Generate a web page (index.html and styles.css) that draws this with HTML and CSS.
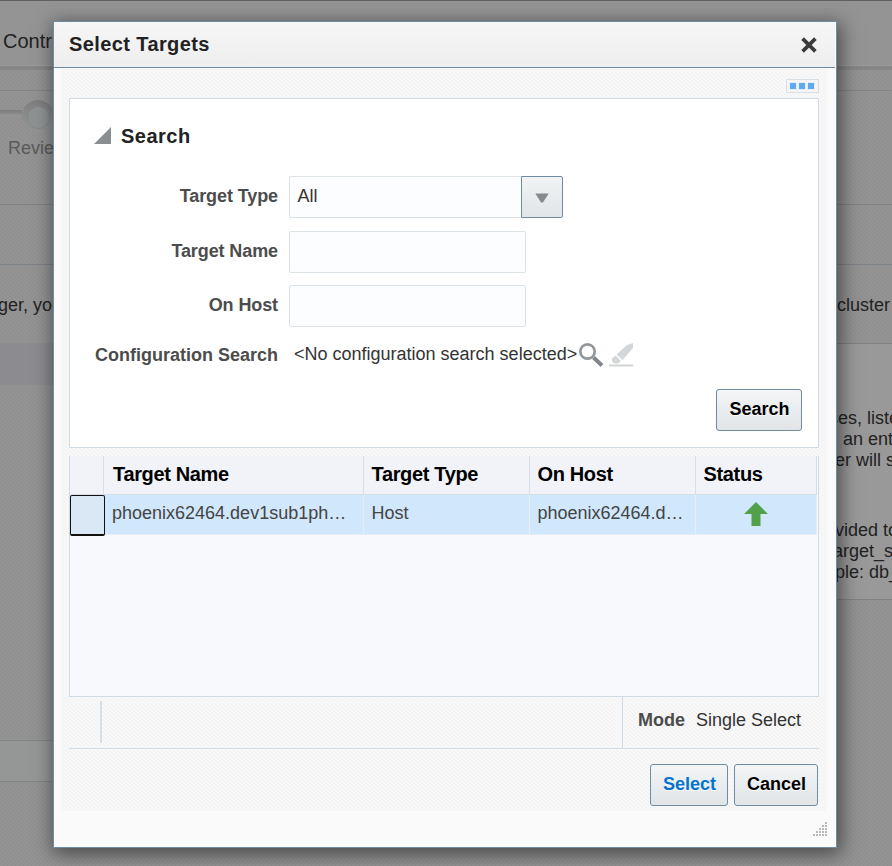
FILE: index.html
```html
<!DOCTYPE html>
<html lang="en">
<head>
<meta charset="utf-8">
<title>Select Targets</title>
<link rel="stylesheet" href="styles.css">
</head>
<body>
<div class="page">
  <header class="page-head">Contr</header>
  <div class="page-shade"></div>
  <div class="page-gap"></div>
  <section class="train">
    <div class="train-track"><span class="train-line"></span><span class="train-stop"></span></div>
    <div class="train-label">Revie</div>
  </section>
  <div class="page-bar"></div>
  <div class="page-note"><span class="note-left">ger, you</span><span>cluster</span></div>
  <div class="page-columns">
    <div class="page-left"><div class="band"></div><div class="field-band"></div></div>
    <div class="page-help">
      <p><span class="clip-ses">ses, liste</span><br><span class="clip-an">an ent</span><br>er will s</p>
      <p><span class="clip-vided">vided to</span><br><span class="clip-arget">arget_s</span><br><span class="clip-ple">ple: db_</span></p>
    </div>
  </div>
</div>

<div class="dialog" role="dialog" aria-labelledby="dialog-title">
  <header class="dialog-head">
    <h1 id="dialog-title">Select Targets</h1>
    <svg class="close" width="18" height="18" viewBox="0 0 18 18"><path d="M2.600 2.600 15.400 15.400M15.400 2.600 2.600 15.400" stroke="#3b3b3b" stroke-width="3.700"/></svg>
  </header>
  <div class="content">
    <div class="busy-row"><div class="busy"><i></i><i></i><i></i></div></div>
    <section class="search">
      <h2><svg width="17" height="17" viewBox="0 0 17 17"><path d="M0 17 17 0V17Z" fill="#8a8d92"/></svg><span>Search</span></h2>
      <div class="form">
        <label>Target Type</label>
        <div class="select"><div class="select-value">All</div><div class="select-arrow"><svg width="14" height="10" viewBox="0 0 14 10"><path d="M.3.4H13.700L8 9.400H6Z" fill="#858b8e"/></svg></div></div>
        <label>Target Name</label>
        <div class="input"></div>
        <label>On Host</label>
        <div class="input"></div>
        <label class="l-conf">Configuration Search</label>
        <div class="conf"><span>&lt;No configuration search selected&gt;</span>
          <svg class="lens" width="26" height="26" viewBox="0 0 26 26" fill="none"><path d="m15.500 15.500 8.500 8" stroke="#81868b" stroke-width="4"/><circle cx="9.500" cy="9.500" r="7.200" fill="#fff" stroke="#92979a" stroke-width="2.700"/></svg>
          <svg class="pencil" width="24" height="24" viewBox="0 0 24 24"><path d="M0 22.500H24" stroke="#d3d4d5" stroke-width="2"/><path d="M24 0V5L13.500 17 7.500 11.500 18 2Z" fill="#d4d7d9"/><path d="M6.500 12.500 12 18 9 20.500H5L3 18V15.500Z" fill="#d4d7d9"/></svg>
        </div>
      </div>
      <div class="search-actions"><button class="btn b-search">Search</button></div>
    </section>
    <div class="table">
      <div class="tr th"><div></div><div>Target Name</div><div>Target Type</div><div>On Host</div><div>Status</div></div>
      <div class="tr td"><div class="rowhead"></div><div>phoenix62464.dev1sub1ph…</div><div>Host</div><div>phoenix62464.d…</div><div class="status"><svg width="24" height="24" viewBox="0 0 24 24"><path d="M12 0 24 12H16.500V24H7.500V12H0Z" fill="#52a04a"/></svg></div></div>
    </div>
    <div class="table-foot"><div class="foot-mark"></div><div class="mode"><b>Mode</b><span>Single Select</span></div></div>
    <div class="actions"><button class="btn primary">Select</button><button class="btn b-cancel">Cancel</button></div>
  </div>
  <div class="grip"><svg width="15" height="15" viewBox="0 0 15 15" fill="#b9b9b9"><path d="M12 0h2v2h-2zM9 3h2v2H9zM12 3h2v2h-2zM6 6h2v2H6zM9 6h2v2H9zM12 6h2v2h-2zM3 9h2v2H3zM6 9h2v2H6zM9 9h2v2H9zM12 9h2v2h-2zM0 12h2v2H0zM3 12h2v2H3zM6 12h2v2H6zM9 12h2v2H9zM12 12h2v2h-2z"/></svg></div>
</div>
</body>
</html>
```
FILE: styles.css
```css
* { box-sizing: border-box; }
body {
  margin: 0;
  height: 866px;
  overflow: hidden;
  font: 18px/21px "Liberation Sans", Arial, sans-serif;
  color: #333;
}
h1, h2, p { margin: 0; }
svg { display: block; flex: none; }

/* dimmed page behind the dialog */
.page {
  height: 866px;
  overflow: hidden;
  color: #222;
  background: linear-gradient(45deg, #959595, #8f8f8f 25%, #959595 50%, #8f8f8f 75%, #959595) 0 0 / 4px 4px;
}
.page-head {
  height: 66px;
  padding: 28px 0 0 3px;
  border-top: 1px solid #606060;
  border-bottom: 1px solid #9c9c9c;
  background: #949494;
  font-size: 20px;
  line-height: 24px;
}
.page-shade { height: 4px; background: #868686; }
.page-gap { height: 21px; border-bottom: 1px solid #818488; }
.train { height: 114px; border-bottom: 1px solid #7d8287; }
.train-track { display: flex; height: 46px; padding-top: 9px; }
.train-line { width: 22px; height: 4px; margin-top: 10px; background: linear-gradient(#7c7c7c, #8b8b8b); }
.train-stop {
  width: 32px;
  height: 32px;
  padding: 6px 5px;
  border-radius: 50%;
  background: linear-gradient(#7e7e7e, #8e8e8e 60%, #939393);
}
.train-stop::before { content: ""; display: block; width: 21px; height: 21px; border: 1px solid #818888; border-radius: 50%; background: #8f9292; }
.train-label { padding: 1px 0 0 8px; color: #5a5a5a; }
.page-bar { height: 60px; border-bottom: 1px solid #7d8287; }
.page-note { display: flex; height: 78px; padding-top: 30px; }
.note-left { width: 837px; margin-left: -2px; }
.page-note span + span { margin-left: 2px; }
.page-columns { display: flex; height: 523px; }
.page-left { width: 820px; }
.band { height: 42px; background: #8c8c90; }
.field-band { height: 42px; margin-top: 355px; border: solid #828484; border-width: 1px 0; background: #949796; }
.page-help {
  width: 72px;
  height: 257px;
  padding: 64px 0 0 16px;
  border: solid #7f8184;
  border-width: 1px 0;
  background: #999;
  white-space: nowrap;
}
.page-help p { height: 112px; margin-left: -1px; }
.clip-ses { margin-left: -6px; }
.clip-an { margin-left: 8px; }
.clip-arget { margin-left: -2px; }

/* dialog */
.dialog {
  position: absolute;
  left: 53px;
  top: 21px;
  width: 784px;
  height: 827px;
  border: 1px solid #708ca0;
  background: #fafafa;
  box-shadow: 2px 4px 18px 2px rgba(0, 0, 0, .5);
}
.dialog-head {
  display: flex;
  align-items: center;
  justify-content: space-between;
  height: 46px;
  margin-right: 1px;
  padding: 0 17px 0 15px;
  border-bottom: 1px solid #708ca0;
  background: linear-gradient(#f6f6f6, #eee);
}
h1 { margin-top: -2px; font-size: 20px; line-height: 24px; color: #222; letter-spacing: .4px; }
.content {
  height: 743px;
  margin: 0 9px 0 7px;
  padding: 0 8px;
  background: linear-gradient(45deg, #fafafa, #f2f2f2 25%, #fafafa 50%, #f2f2f2 75%, #fafafa) 0 0 / 4px 4px;
}
.busy-row { display: flex; justify-content: flex-end; height: 30px; padding-top: 11px; }
.busy { display: flex; gap: 3px; width: 33px; height: 14px; padding: 3px 0 0 3px; border: 1px solid #d9e0e5; background: #f3f5f6; }
.busy i { width: 6px; height: 6px; background: #60abef; box-shadow: 0 0 1px #9bc9f3; }
.search { height: 350px; border: 1px solid #d0dce5; background: #fff; }
h2 { display: flex; align-items: center; gap: 10px; height: 24px; margin: 25px 0 0 24px; font-size: 20px; line-height: 24px; color: #222; letter-spacing: .5px; }
h2 svg { margin-top: -2px; }
.form { display: grid; grid-template-columns: 208px 1fr; grid-template-rows: 55px 54px 49px 50px; column-gap: 11px; margin-top: 28px; }
.form label { padding-top: 10px; text-align: right; font-weight: bold; color: #4c4c4c; letter-spacing: -.1px; white-space: nowrap; }
.form .l-conf { padding-top: 11px; letter-spacing: 0; }
.select { display: flex; width: 274px; height: 42px; }
.select-value { width: 232px; padding: 9px 0 0 7.500px; border: 1px solid #dce3e6; border-right: 0; border-radius: 2px 0 0 2px; background: #fcfdff; }
.select-arrow { display: flex; align-items: center; justify-content: center; width: 42px; padding-top: 2px; border: 1px solid #708ca0; border-radius: 0 2px 2px 0; background: linear-gradient(#f1f3f4, #e1e5e8); }
.input { width: 237px; height: 42px; border: 1px solid #dce3e6; border-radius: 2px; background: #fcfdff; }
.conf { display: flex; padding: 10px 0 0 5px; white-space: nowrap; }
.lens { margin: -2px 0 0 1px; }
.pencil { margin: -1px 0 0 5px; }
.search-actions { display: flex; justify-content: flex-end; padding: 5px 16px 0 0; }
.btn {
  height: 42px;
  padding: 0 0 2px 1px;
  border: 1px solid #708ca0;
  border-radius: 3px;
  background: linear-gradient(#f3f5f6, #e1e5e8);
  font: bold 18px/21px "Liberation Sans", Arial, sans-serif;
  color: #000;
  text-shadow: 0 1px 0 #fff;
}
.b-search { width: 86px; }
.primary { width: 78px; color: #0572ce; }
.b-cancel { width: 84px; }
.table { height: 241px; margin-top: 8px; border: 1px solid #d0dce5; border-top: 0; background: #f7f9fd; }
.tr { display: grid; grid-template-columns: 34px 260px 166px 166px 121px; width: 747px; }
.th { height: 39px; font-size: 20px; font-weight: bold; letter-spacing: -.35px; color: #000; background: #f1f3f8; }
.th > div { padding: 8px 0 0 9px; border: solid #d6dfe6; border-width: 0 1px 1px 0; }
.td { height: 40px; color: #444; }
.td > div { height: 40px; padding: 8px 0 0 8px; border: solid #e6edf3; border-width: 0 1px 1px 0; background: #d0e7fc; white-space: nowrap; }
.th > div:nth-child(n+3), .td > div:nth-child(n+3) { padding-left: 7.500px; }
.td > .rowhead { width: 35px; height: 41px; padding: 0; position: relative; border: 2px solid #111; border-width: 1px 1px 2px; border-radius: 2px; background: #dae7f5; }
.td > div.status { display: flex; justify-content: center; padding: 7px 0 0; }
.table-foot { display: flex; justify-content: space-between; height: 52px; border-bottom: 1px solid #d0dce5; }
.foot-mark { width: 2px; height: 42px; margin: 4px 0 0 31px; background: #d6dfe6; }
.mode { display: flex; gap: 11px; width: 197px; padding: 13px 0 0 15px; border-left: 1px solid #d0dce5; white-space: nowrap; }
.mode b { color: #4c4c4c; }
.actions { display: flex; justify-content: flex-end; gap: 6px; padding: 15px 1px 0 0; }
.grip { display: flex; justify-content: flex-end; padding: 11px 8px 0 0; }
```
